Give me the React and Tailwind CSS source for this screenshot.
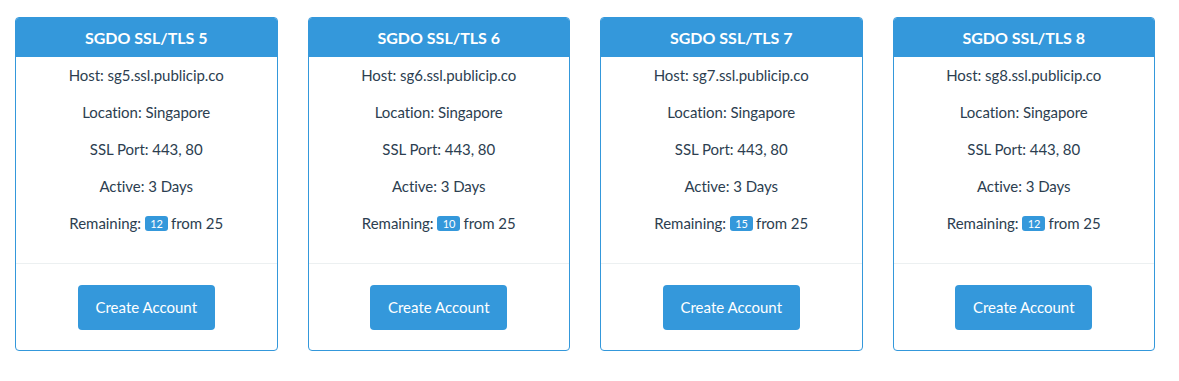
const servers = [
  { n: 5, rem: 12 },
  { n: 6, rem: 10 },
  { n: 7, rem: 15 },
  { n: 8, rem: 12 },
];

function Card({ n, rem }) {
  return (
    <div className="px-[15px]">
      <div className="border border-[#3498db] rounded-[4px] bg-white overflow-hidden">
        <div className="bg-[#3498db] h-[39px] flex items-center justify-center text-white font-bold text-[16px]">
          SGDO SSL/TLS {n}
        </div>
        <div className="pb-[21px] tracking-[-0.05px]">
          <div className="h-[37px] flex items-center justify-center">Host: sg{n}.ssl.publicip.co</div>
          <div className="h-[37px] flex items-center justify-center">Location: Singapore</div>
          <div className="h-[37px] flex items-center justify-center">SSL Port: 443, 80</div>
          <div className="h-[37px] flex items-center justify-center">Active: 3 Days</div>
          <div className="h-[37px] flex items-center justify-center">
            <span>Remaining:</span>
            <span className="inline-flex items-center justify-center bg-[#3498db] text-white text-[11px] leading-none h-[15px] w-[23px] rounded-[3px] ml-[4px] mr-[3px]">
              {rem}
            </span>
            <span>from 25</span>
          </div>
        </div>
        <div className="border-t border-[#ecf0f1] pt-[21px] pb-[20px] flex justify-center">
          <button className="bg-[#3498db] text-white text-[15px] w-[137px] h-[45px] rounded-[4px]">
            Create Account
          </button>
        </div>
      </div>
    </div>
  );
}

export default function App() {
  return (
    <div className="bg-white w-[1179px] h-[381px] text-[#2c3e50] text-[15px]" style={{ fontFamily: "Lato, 'Liberation Sans', sans-serif" }}>
      <div className="w-[1170px] grid grid-cols-4 pt-[17px]">
        {servers.map((s) => (
          <Card key={s.n} {...s} />
        ))}
      </div>
    </div>
  );
}
